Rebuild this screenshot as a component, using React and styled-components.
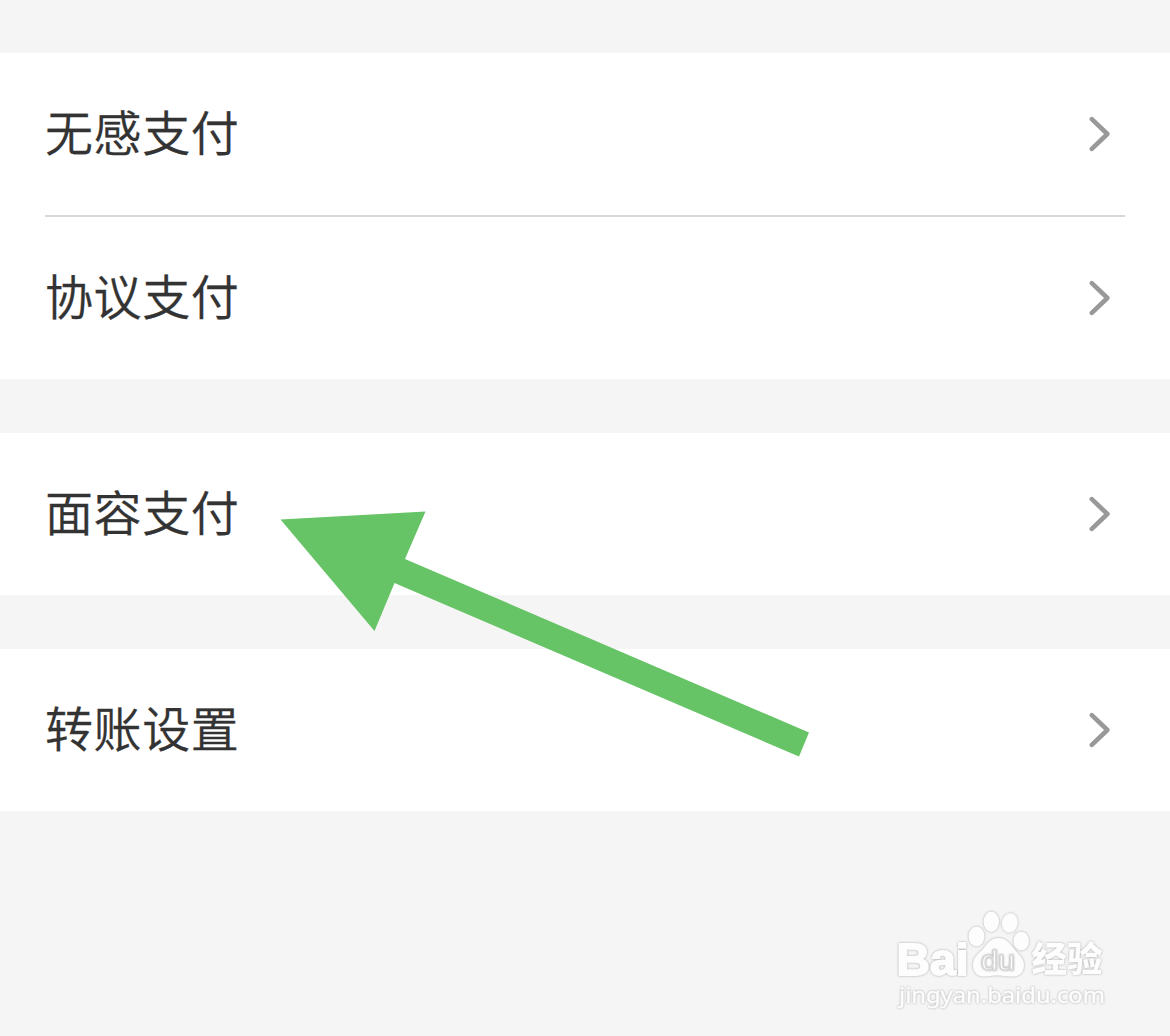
import React from 'react';
import styled, { createGlobalStyle } from 'styled-components';

const GlobalStyle = createGlobalStyle`
    body {
        margin: 0;
        background-color: #f5f5f5;
        font-family: "Noto Sans CJK SC", sans-serif;
    }
`;

const Page = styled.main`
    position: relative;
    box-sizing: border-box;
    height: 1036px;
    padding-top: 53px;
    display: flex;
    flex-direction: column;
    gap: 54px;
    overflow: hidden;
`;

const Group = styled.section`
    padding: 0 45px;
    background-color: #ffffff;
`;

const Row = styled.div`
    height: 162px;
    display: flex;
    justify-content: space-between;
    align-items: center;
    padding-right: 14px;
    border-top: ${props => (props.$divided ? '2px solid #d8d8d8' : 'none')};
`;

const Label = styled.span`
    padding-bottom: 8px;
    font-size: 48px;
    font-weight: 350;
    line-height: 72px;
    letter-spacing: 0.6px;
    color: #333333;
    -webkit-text-stroke: 0.3px #333333;
`;

const Chevron = styled.svg`
    width: 24px;
    height: 40px;
    fill: none;
    stroke: #999999;
    stroke-width: 4.6;
    stroke-linecap: round;
    stroke-linejoin: round;
`;

const Arrow = styled.svg`
    position: absolute;
    left: 280px;
    top: 510px;
    width: 530px;
    height: 248px;
    fill: #66c466;
`;

const Watermark = styled.svg`
    position: absolute;
    left: 885px;
    top: 900px;
    width: 240px;
    height: 120px;
    fill: #fdfdfd;
    stroke: #fdfdfd;
    stroke-width: 0;

    text, ellipse, path {
        filter: drop-shadow(0 0 0.8px #a8a8a8);
    }
`;

const Brand = styled.text`
    font: bold 45px "Liberation Sans", sans-serif;
    stroke-width: 1.8;
`;

const BrandCn = styled.text`
    font: 900 35px "Noto Sans CJK SC", sans-serif;
`;

const Paw = styled.text`
    font: 28px "Liberation Sans", sans-serif;
    stroke: #d6d6d6;
    stroke-width: 1.2;
`;

const Site = styled.text`
    font: 22.5px "Noto Sans", sans-serif;
    stroke-width: 0.4;
`;

const groups = [
    ['无感支付', '协议支付'],
    ['面容支付'],
    ['转账设置'],
];

function App() {
    return (
        <Page>
            <GlobalStyle />
            {groups.map(rows => (
                <Group key={rows[0]}>
                    {rows.map((label, i) => (
                        <Row key={label} $divided={i > 0}>
                            <Label>{label}</Label>
                            <Chevron viewBox="0 0 24 40">
                                <path d="M4.8 5.2 L20.4 20 L4.8 34.8" />
                            </Chevron>
                        </Row>
                    ))}
                </Group>
            ))}
            <Arrow viewBox="0 0 530 248">
                <path d="M0.5 9.5 L145.5 1.5 L125 49 L529 222.5 L519 246.5 L114.5 73 L94.5 121 Z" />
            </Arrow>
            <Watermark viewBox="0 0 240 120">
                <Brand x="11.5" y="74.5" textLength="72" lengthAdjust="spacingAndGlyphs">Bai</Brand>
                <ellipse cx="91.5" cy="36.5" rx="8" ry="10" />
                <ellipse cx="106.3" cy="21.8" rx="7.7" ry="10.3" />
                <ellipse cx="124.8" cy="23" rx="8" ry="10" transform="rotate(10 124.8 23)" />
                <ellipse cx="136.3" cy="41" rx="7.8" ry="9.5" />
                <path d="M113.5 38 C105 38 102 44 98 49 C93 54 88 57 88 65 C88 73 93 77 100 76.5 C106 76 109 75.5 114 75.5 C119 75.5 122 77 129 76.5 C136 76 139 71 139 65 C139 58 133 54 129 49 C125 44 122 38 113.5 38 Z" />
                <Paw x="96" y="70" textLength="34" lengthAdjust="spacingAndGlyphs">du</Paw>
                <BrandCn x="146.5" y="72" textLength="71" lengthAdjust="spacingAndGlyphs">经验</BrandCn>
                <Site x="14" y="102.5" textLength="206" lengthAdjust="spacingAndGlyphs">jingyan.baidu.com</Site>
            </Watermark>
        </Page>
    );
}

export default App;
